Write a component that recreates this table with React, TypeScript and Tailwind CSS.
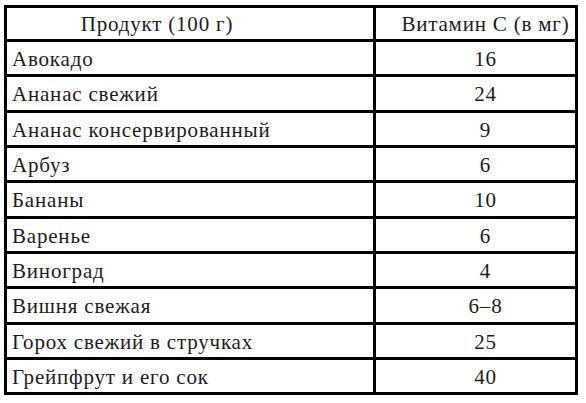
const rows: [string, string, string][] = [
  ["Авокадо", "16", "h-[35px]"],
  ["Ананас свежий", "24", "h-[36px]"],
  ["Ананас консервированный", "9", "h-[35px]"],
  ["Арбуз", "6", "h-[35px]"],
  ["Бананы", "10", "h-[36px]"],
  ["Варенье", "6", "h-[35px]"],
  ["Виноград", "4", "h-[35px]"],
  ["Вишня свежая", "6–8", "h-[36px]"],
  ["Горох свежий в стручках", "25", "h-[35px]"],
  ["Грейпфрут и его сок", "40", "h-[35px]"],
];

export default function App() {
  return (
    <div className="w-[586px] h-[403px] bg-white pt-[5px] pl-[4px] font-['Liberation_Serif',serif] text-[21px] tracking-[0.8px] text-[#1c1c1c]">
      <div className="w-[574px] border-[3px] border-black">
        {/* header */}
        <div className="flex h-[31px]">
          <div className="w-[366px] flex items-center justify-center pr-[66px] pt-[2px]">Продукт (100 г)</div>
          <div className="w-[202px] border-l-[3px] border-black flex items-center justify-center pl-[20px] pt-[2px]">
            Витамин С (в мг)
          </div>
        </div>
        {rows.map(([name, value, h]) => (
          <div key={name} className={`flex border-t-[3px] border-black ${h}`}>
            <div className="w-[366px] flex items-center pl-[5px] pt-[3px]">{name}</div>
            <div className="w-[202px] border-l-[3px] border-black flex items-center justify-center pl-[20px] pt-[3px]">
              {value}
            </div>
          </div>
        ))}
      </div>
    </div>
  );
}
